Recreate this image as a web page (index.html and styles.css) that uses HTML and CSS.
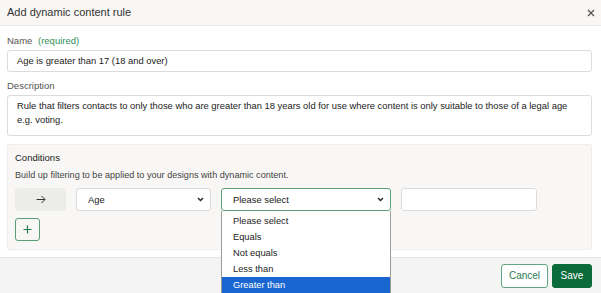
FILE: index.html
```html
<!DOCTYPE html>
<html>
<head>
<meta charset="utf-8">
<link rel="stylesheet" href="styles.css">
</head>
<body>
<div class="header">
  <div class="title">Add dynamic content rule</div>
  <svg class="close" width="8" height="8" viewBox="0 0 8 8"><path d="M1 1L7 7M7 1L1 7" stroke="#555" stroke-width="1.3"/></svg>
</div>
<div class="content">
  <div class="label lbl-name">Name <span class="req">(required)</span></div>
  <div class="input">Age is greater than 17 (18 and over)</div>
  <div class="label lbl-desc">Description</div>
  <div class="textarea">Rule that filters contacts to only those who are greater than 18 years old for use where content is only suitable to those of a legal age e.g. voting.</div>
  <div class="panel">
    <div class="ptitle">Conditions</div>
    <div class="psub">Build up filtering to be applied to your designs with dynamic content.</div>
    <div class="row">
      <div class="arrowbox"><svg width="10" height="9" viewBox="0 0 10 9"><path d="M0.5 4.5H9M5.5 1L9 4.5L5.5 8" fill="none" stroke="#333" stroke-width="1"/></svg></div>
      <div class="select sel-age"><span>Age</span><svg width="7" height="5" viewBox="0 0 7 5"><path d="M1 1L3.5 3.5L6 1" fill="none" stroke="#222" stroke-width="1.4"/></svg></div>
      <div class="selwrap">
        <div class="select sel-op"><span>Please select</span><svg width="7" height="5" viewBox="0 0 7 5"><path d="M1 1L3.5 3.5L6 1" fill="none" stroke="#222" stroke-width="1.4"/></svg></div>
        <div class="dropdown">
          <div class="opt">Please select</div>
          <div class="opt">Equals</div>
          <div class="opt">Not equals</div>
          <div class="opt">Less than</div>
          <div class="opt active">Greater than</div>
        </div>
      </div>
      <div class="input val"></div>
    </div>
    <div class="plus"><svg width="9" height="9" viewBox="0 0 9 9"><path d="M4.5 0.5V8.5M0.5 4.5H8.5" stroke="#1f7a4c" stroke-width="1.2"/></svg></div>
  </div>
</div>
<div class="footer">
  <div class="btn cancel">Cancel</div>
  <div class="btn save">Save</div>
</div>
</body>
</html>
```
FILE: styles.css
```css
html, body {
  margin: 0;
  padding: 0;
  background: #fff;
  font-family: "Liberation Sans", Arial, sans-serif;
  color: #333;
  width: 601px;
  height: 293px;
  overflow: hidden;
}
.header {
  height: 26px;
  background: #f8f7f5;
  border-bottom: 1px solid #ebeae8;
  display: flex;
  align-items: center;
  justify-content: space-between;
  padding: 0 6px 0 7px;
  box-sizing: border-box;
}
.title {
  font-size: 11px;
  color: #333;
  margin-top: -2px;
}
.content {
  padding: 0 9px 0 7px;
}
.label {
  font-size: 9.5px;
  color: #555;
  line-height: 12px;
}
.lbl-name { margin-top: 9px; }
.lbl-desc { margin-top: 8px; }
.req { color: #2f8f58; margin-left: 3px; }
.input {
  margin-top: 3px;
  height: 22px;
  box-sizing: border-box;
  border: 1px solid #dcdcdc;
  border-radius: 3px;
  background: #fff;
  font-size: 9.4px;
  line-height: 20px;
  padding-left: 9px;
  color: #222;
}
.textarea {
  margin-top: 3px;
  height: 41px;
  box-sizing: border-box;
  border: 1px solid #dcdcdc;
  border-radius: 3px;
  font-size: 9.4px;
  line-height: 14px;
  padding: 3px 8px 3px 9px;
  color: #222;
}
.panel {
  margin-top: 8px;
  height: 106px;
  box-sizing: border-box;
  background: #f8f7f5;
  border: 1px solid #efeeec;
  border-radius: 2px;
  padding: 6px 7px 7px;
}
.ptitle {
  font-size: 9.5px;
  color: #222;
  line-height: 13px;
}
.psub {
  margin-top: 6px;
  font-size: 9.1px;
  color: #444;
  line-height: 11px;
}
.row {
  margin-top: 7px;
  display: flex;
  gap: 10px;
  height: 23px;
}
.arrowbox {
  width: 51px;
  height: 23px;
  background: #ececeb;
  border-radius: 3px;
  display: flex;
  align-items: center;
  justify-content: center;
}
.select {
  height: 23px;
  box-sizing: border-box;
  background: #fff;
  border: 1px solid #dcdcdc;
  border-radius: 3px;
  display: flex;
  align-items: center;
  justify-content: space-between;
  padding: 0 6px 0 11px;
  font-size: 9.4px;
  color: #222;
}
.sel-age { width: 135px; }
.selwrap { position: relative; width: 170px; }
.sel-op {
  width: 170px;
  border: 1px solid #5f9d7b;
  border-radius: 3px;
}
.val {
  margin-top: 0;
  width: 136px;
  height: 23px;
}
.dropdown {
  position: absolute;
  left: 0;
  top: 23px;
  width: 170px;
  box-sizing: border-box;
  background: #fff;
  border: 1px solid #9a9a9a;
  border-top: none;
  padding-top: 2px;
  z-index: 5;
}
.opt {
  height: 16px;
  line-height: 16px;
  font-size: 9.3px;
  padding-left: 11px;
  color: #222;
}
.opt.active {
  background: #1a66d1;
  color: #fff;
}
.plus {
  margin-top: 7px;
  width: 25px;
  height: 23px;
  box-sizing: border-box;
  border: 1px solid #5a9e78;
  border-radius: 3px;
  display: flex;
  align-items: center;
  justify-content: center;
}
.footer {
  margin-top: 7px;
  height: 40px;
  background: #f4f4f4;
  border-top: 1px solid #e6e6e6;
  display: flex;
  justify-content: flex-end;
  gap: 4px;
  padding: 6px 9px 0 0;
  box-sizing: border-box;
}
.btn {
  height: 24px;
  box-sizing: border-box;
  border-radius: 3px;
  font-size: 10px;
  line-height: 22px;
  text-align: center;
}
.cancel {
  width: 47px;
  border: 1px solid #62a582;
  color: #2a7a56;
  background: #fff;
}
.save {
  width: 40px;
  background: #0b6b3a;
  border: 1px solid #0b6b3a;
  color: #fff;
}
```
